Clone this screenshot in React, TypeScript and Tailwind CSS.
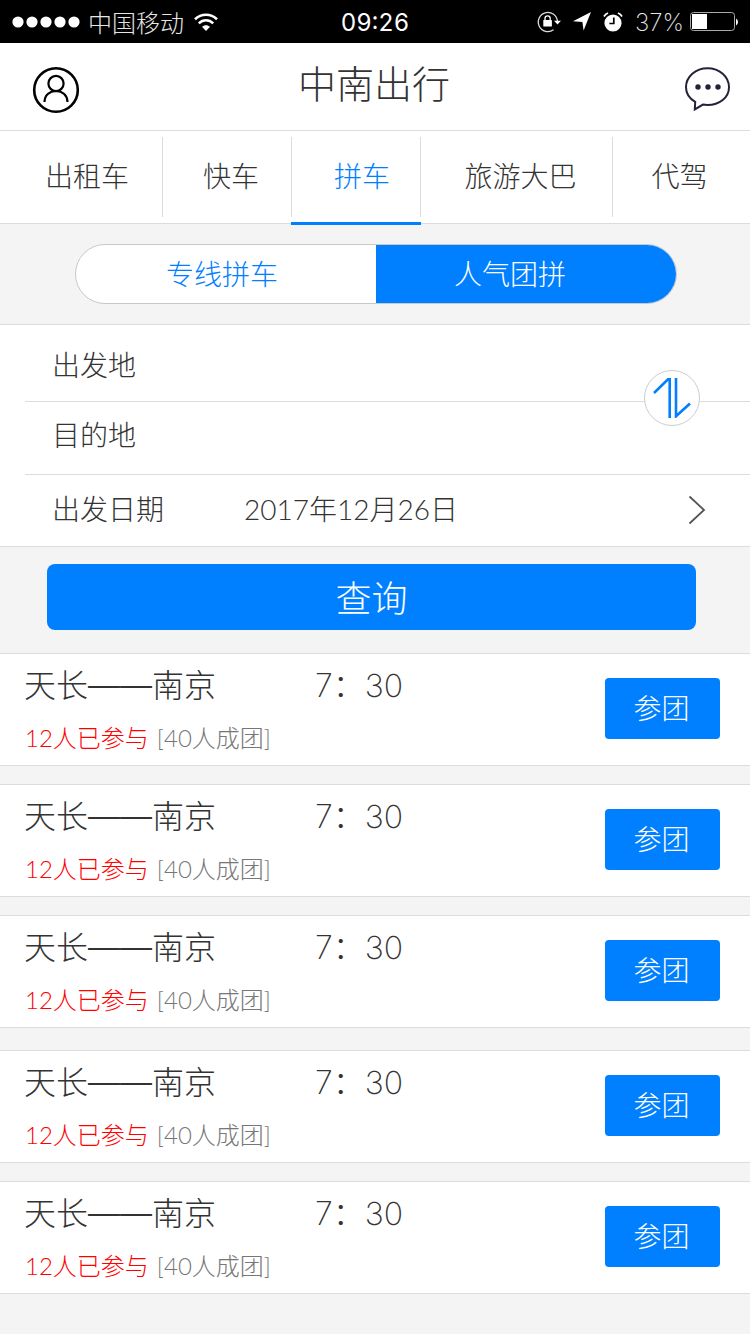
import { useState } from "react";

const tabs = [
  { label: "出租车", cell: "pl-3" },
  { label: "快车", cell: "pl-2" },
  { label: "拼车", cell: "pl-3" },
  { label: "旅游大巴", cell: "pl-2" },
  { label: "代驾", cell: "pr-1" },
];

const groups = [
  [1, 2, 3],
  [4, 5],
];

function StatusBar() {
  return (
    <div className="grid h-[43px] grid-cols-3 items-center bg-black px-3 text-2xl leading-8 text-white">
      <div className="flex items-center gap-2">
        <svg width="68" height="12" viewBox="0 0 68 12" fill="#fff" aria-hidden="true">
          <circle cx="6" cy="6" r="5.6" />
          <circle cx="20" cy="6" r="5.6" />
          <circle cx="34" cy="6" r="5.6" />
          <circle cx="48" cy="6" r="5.6" />
          <circle cx="62" cy="6" r="5.6" />
        </svg>
        <span className="pt-1 whitespace-nowrap text-[#e6e6e6]">中国移动</span>
        <svg className="ml-0.5" width="24" height="18" viewBox="0 0 24 18" aria-hidden="true">
          <path d="M1 6.200C7.300.2 16.700.2 23 6.200" fill="none" stroke="#fff" strokeWidth="2.6" />
          <path d="M4.800 10.300c4.200-4 10.200-4 14.400 0" fill="none" stroke="#fff" strokeWidth="2.5" />
          <path d="M12 18l-4-4.200c2.300-2.200 5.700-2.200 8 0z" fill="#fff" />
        </svg>
      </div>
      <div className="pt-0.5 text-center font-normal tabular-nums">09:26</div>
      <div className="flex items-center justify-end">
        <svg width="24" height="22" viewBox="0 0 24 22" fill="none" aria-hidden="true">
          <path d="M16.500 18.800A9.600 9.600 0 1 1 20.400 10" stroke="#ddd" strokeWidth="1.3" />
          <path d="M17 9.800h7l-3.500 3.700z" fill="#fff" />
          <rect x="6.3" y="9" width="8.6" height="6.6" rx="0.6" fill="#fff" />
          <path d="M8 9V7.500a2.600 2.600 0 0 1 5.200 0V9" stroke="#fff" strokeWidth="1.3" />
        </svg>
        <svg className="ml-3" width="18" height="19" viewBox="0 0 18 19" fill="#fff" aria-hidden="true">
          <path d="M18 0L10.600 18.400 9.400 10 0 9.200z" />
        </svg>
        <svg className="ml-3" width="20" height="20" viewBox="0 0 20 20" fill="none" aria-hidden="true">
          <circle cx="10" cy="11" r="8.6" fill="#fff" />
          <path d="M1 4.500Q2.400 2 5 1M19 4.500Q17.600 2 15 1" stroke="#fff" strokeWidth="1.8" />
          <path d="M10.800 5.500v6H6.400" stroke="#000" strokeWidth="1.7" />
        </svg>
        <span className="ml-3 pt-0.5 font-extralight text-[#e6e6e6]">37%</span>
        <svg className="ml-1.5" width="48" height="20" viewBox="0 0 48 20" fill="none" aria-hidden="true">
          <rect x="0.5" y="0.5" width="44" height="18" rx="3" stroke="#aaa" />
          <rect x="2" y="2" width="15" height="15" fill="#fff" />
          <path d="M46 6.500q2 1 2 3.500t-2 3.500z" fill="#fff" />
        </svg>
      </div>
    </div>
  );
}

function Header() {
  return (
    <header className="flex h-22 items-center justify-between border-b border-[#dcdcdc] bg-white pr-5 pl-8">
      <button type="button" aria-label="个人中心" className="mt-1.5">
        <svg width="48" height="48" viewBox="0 0 48 48" fill="none" stroke="#000">
          <circle cx="24" cy="24" r="21.8" strokeWidth="2.6" />
          <circle cx="24" cy="17.500" r="7.600" strokeWidth="2.2" />
          <path d="M12.500 36c0-6.500 5-11 11.500-11s11.500 4.500 11.500 11" strokeWidth="2.2" />
        </svg>
      </button>
      <h1 className="pr-4 pb-1.5 text-[38px] leading-12 text-[#333]">中南出行</h1>
      <button type="button" aria-label="消息" className="mt-1">
        <svg width="46" height="46" viewBox="0 0 46 46" fill="none">
          <path
            d="M11.200 35.800C5.300 32.500 2 27.200 2 21.300 2 10.800 11.600 2.200 23.500 2.200S45 10.800 45 21.200 35.400 39 23.500 39c-1.600 0-3.100-.1-4.600-.4L10.800 43.400z"
            stroke="#24223a"
            strokeWidth="2"
          />
          <g fill="#24223a">
            <circle cx="14" cy="21" r="2.7" />
            <circle cx="24" cy="21" r="2.7" />
            <circle cx="34" cy="21" r="2.7" />
          </g>
        </svg>
      </button>
    </header>
  );
}

function Tabs() {
  const [active, setActive] = useState(2);
  return (
    <nav className="grid h-[93px] grid-cols-[163fr_129fr_129fr_192fr_137fr] border-b border-[#dcdcdc] bg-white text-[28px] leading-10">
      {tabs.map((tab, i) => (
        <div key={tab.label} className="relative flex py-1.5">
          <button
            type="button"
            onClick={() => setActive(i)}
            className={`flex-1 border-[#dcdcdc] ${tab.cell} ${i < tabs.length - 1 ? "border-r" : ""} ${
              i === active ? "text-[#0080ff]" : "text-[#333]"
            }`}
          >
            {tab.label}
          </button>
          {i === active && <span className="absolute right-0 -bottom-0.5 -left-px h-[3px] bg-[#0080ff]" />}
        </div>
      ))}
    </nav>
  );
}

function ModeSwitch() {
  const [mode, setMode] = useState(1);
  return (
    <div className="py-5 pr-[73px] pl-[75px] text-[28px]">
      <div className="grid h-15 grid-cols-2 overflow-hidden rounded-full border border-[#c8c8c8] bg-white">
        {["专线拼车", "人气团拼"].map((label, i) => (
          <button
            key={label}
            type="button"
            onClick={() => setMode(i)}
            className={`-my-px pt-0.5 ${i === 0 ? "pr-2" : "pr-8"} ${
              i === mode ? "bg-[#0080ff] text-white" : "text-[#0080ff]"
            }`}
          >
            {label}
          </button>
        ))}
      </div>
    </div>
  );
}

function SearchForm() {
  return (
    <form onSubmit={(e) => e.preventDefault()}>
      <div className="relative border-y border-[#dcdcdc] bg-white pl-[25px] text-[28px] leading-10 text-[#333]">
        <div className="flex h-[77px] items-center border-b border-[#dcdcdc] pt-1.5 pl-[27px]">
          <label htmlFor="from" className="w-48">
            出发地
          </label>
          <input id="from" type="text" className="min-w-0 flex-1 outline-none" />
        </div>
        <div className="flex h-[73px] items-center border-b border-[#dcdcdc] pb-1 pl-[27px]">
          <label htmlFor="to" className="w-48">
            目的地
          </label>
          <input id="to" type="text" className="min-w-0 flex-1 outline-none" />
        </div>
        <div className="flex h-[71px] items-center pr-11 pb-0.5 pl-[27px]">
          <label htmlFor="date" className="w-48">
            出发日期
          </label>
          <button id="date" type="button" className="flex flex-1 items-center justify-between">
            <span className="pb-0.5 font-['Lato','Noto_Sans_CJK_SC',sans-serif]">2017年12月26日</span>
            <svg width="18" height="30" viewBox="0 0 18 30" fill="none" aria-hidden="true">
              <path d="M1.500 1.500L16 15 1.500 28.500" stroke="#555" strokeWidth="1.800" />
            </svg>
          </button>
        </div>
        <button
          type="button"
          aria-label="交换出发地和目的地"
          className="absolute top-[45px] right-[50px] flex size-14 items-center justify-center rounded-full border border-[#ccc] bg-white"
        >
          <svg width="38" height="40" viewBox="0 0 38 40" fill="none" stroke="#0080ff" strokeWidth="2.6">
            <path d="M1 15L15 1.300h1.700V40" />
            <path d="M23 0v38.300L37 25.500" />
          </svg>
        </button>
      </div>
      <div className="pt-[17px] pr-[54px] pb-[23px] pl-[47px]">
        <button type="submit" className="h-[66px] w-full rounded-lg bg-[#0080ff] pt-1 text-4xl text-white">
          查询
        </button>
      </div>
    </form>
  );
}

function TripCard() {
  return (
    <li className="flex h-[113px] items-center justify-between border-y border-[#dcdcdc] bg-white pr-[30px] pl-6">
      <div className="flex flex-col gap-2 pt-px">
        <div className="flex text-[32px] leading-12 text-[#333]">
          <span className="w-[291px]">天长——南京</span>
          <span className="font-extralight">7：30</span>
        </div>
        <p className="flex gap-2 pl-px font-['Lato','Noto_Sans_CJK_SC',sans-serif] text-2xl leading-10">
          <span className="text-[#ff0000]">12人已参与</span>
          <span className="text-[#777]">[40人成团]</span>
        </p>
      </div>
      <button type="button" className="mb-0.5 h-[61px] w-[115px] rounded-sm bg-[#0080ff] pr-0.5 text-[28px] text-white">
        参团
      </button>
    </li>
  );
}

export default function App() {
  return (
    <div className="min-h-screen bg-[#f4f4f4] font-['Inter','Noto_Sans_CJK_SC',sans-serif] font-light">
      <StatusBar />
      <Header />
      <Tabs />
      <ModeSwitch />
      <SearchForm />
      <div className="flex flex-col gap-[22px] pb-10">
        {groups.map((group) => (
          <ul key={group[0]} className="flex flex-col gap-[18px]">
            {group.map((id) => (
              <TripCard key={id} />
            ))}
          </ul>
        ))}
      </div>
    </div>
  );
}
